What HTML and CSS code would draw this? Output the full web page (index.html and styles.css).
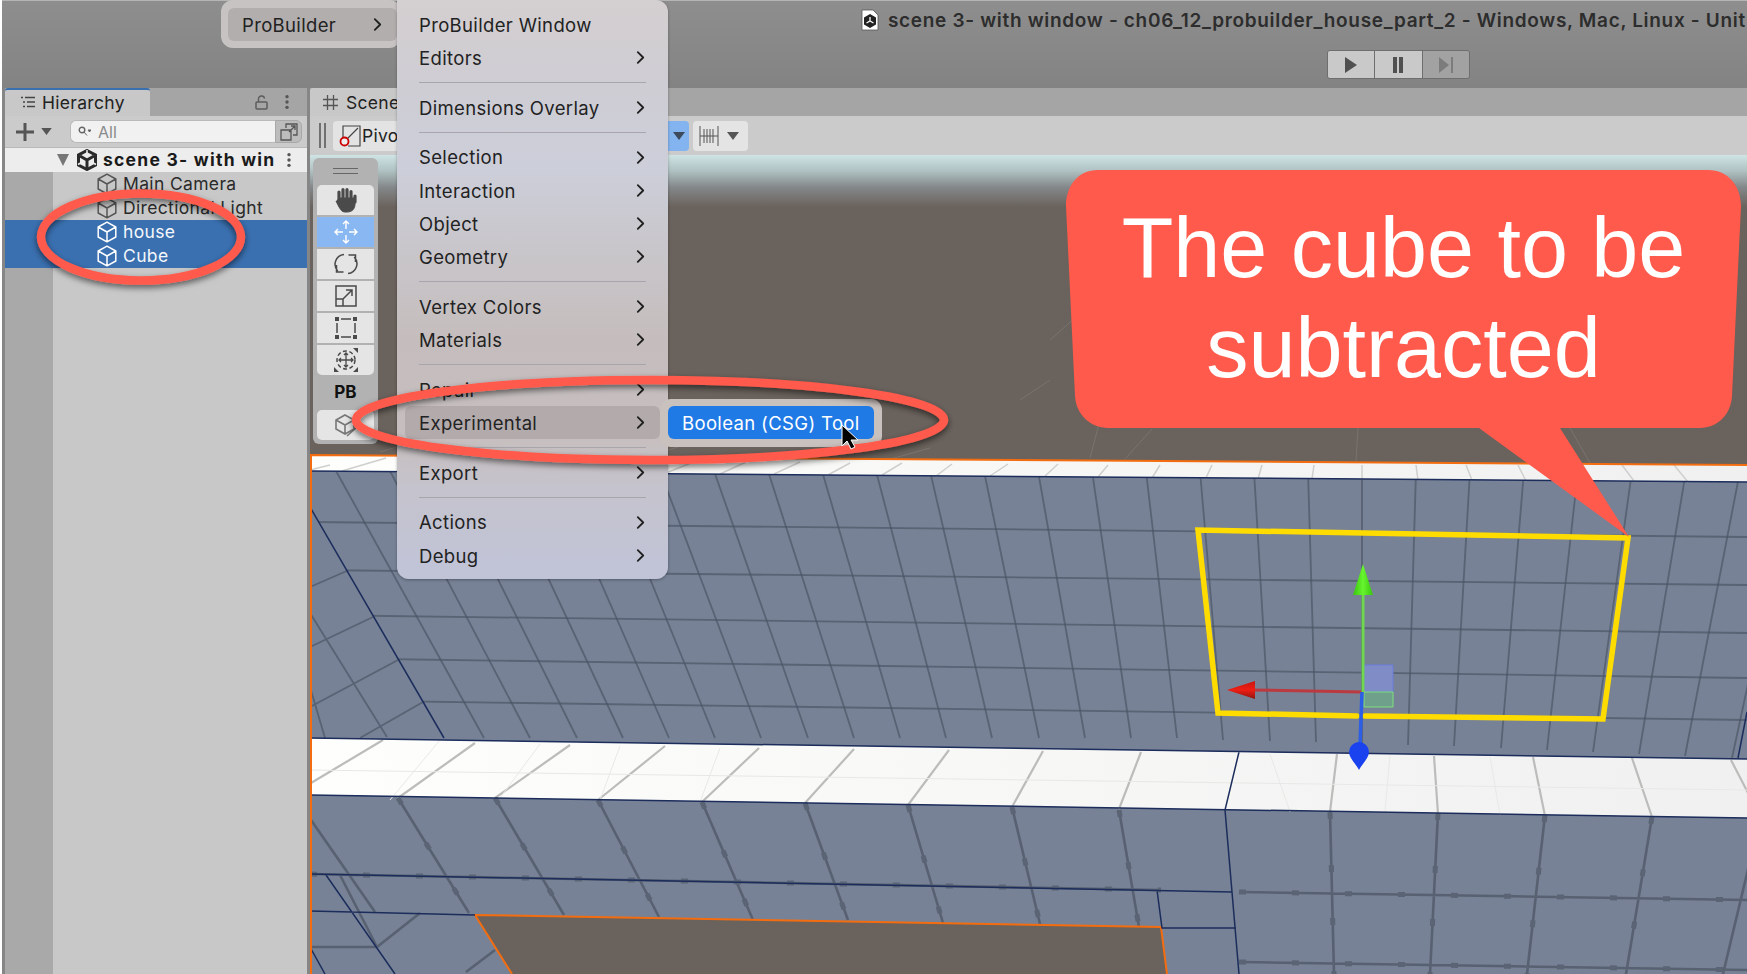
FILE: index.html
```html
<!DOCTYPE html>
<html lang="en">
<head>
<meta charset="utf-8">
<title>ProBuilder Boolean tool</title>
<link rel="stylesheet" href="styles.css">
</head>
<body>
<svg class="sprite" aria-hidden="true">
  <symbol id="chev" viewBox="0 0 10 16"><path d="M2 2L8 8L2 14" fill="none" stroke="currentColor" stroke-width="2" stroke-linecap="round" stroke-linejoin="round"/></symbol>
  <symbol id="cube" viewBox="0 0 20 22"><path d="M10 1.2L18.8 6V16L10 20.8L1.2 16V6ZM1.2 6L10 11L18.8 6M10 11V20.8" fill="none" stroke="currentColor" stroke-width="1.5" stroke-linejoin="round"/></symbol>
  <symbol id="kebab" viewBox="0 0 6 18"><circle cx="3" cy="3" r="1.9" fill="currentColor"/><circle cx="3" cy="9" r="1.9" fill="currentColor"/><circle cx="3" cy="15" r="1.9" fill="currentColor"/></symbol>
  <symbol id="tri" viewBox="0 0 12 8"><path d="M0 0H12L6 8Z" fill="currentColor"/></symbol>
</svg>
<div class="app">
  <header class="titlebar">
    <div class="title-row">
      <svg class="doc-icon" viewBox="0 0 18 22"><path d="M1 1H12L17 6V21H1Z" fill="#fff" stroke="#555" stroke-width=".8"/><path d="M9 5L15 8.500V15.500L9 19L3 15.500V8.500Z" fill="#222"/><path d="M9 8V12M5.500 14L9 12L12.500 14" stroke="#fff" stroke-width="1.300" fill="none"/></svg>
      <span class="title-text">scene 3- with window - ch06_12_probuilder_house_part_2 - Windows, Mac, Linux - Unit</span>
    </div>
    <div class="play-row">
      <div class="play-group">
        <div class="play-btn"><svg width="14" height="16" viewBox="0 0 14 16"><path d="M1 0L13 8L1 16Z" fill="#505050"/></svg></div>
        <div class="play-btn"><svg width="14" height="16" viewBox="0 0 14 16"><path d="M2 0H6V16H2ZM8 0H12V16H8Z" fill="#505050"/></svg></div>
        <div class="play-btn play-btn-off"><svg width="18" height="16" viewBox="0 0 18 16"><path d="M2 0L12 8L2 16Z M14 0H16V16H14Z" fill="#7c7c7c"/></svg></div>
      </div>
    </div>
  </header>

  <main class="workspace">
    <section class="hierarchy">
      <div class="tabbar">
        <div class="tab tab-active">
          <svg class="tab-icon" width="15" height="12" viewBox="0 0 15 12"><path d="M1 1.500H3M5 1.500H15M3 6H5M7 6H15M3 10.500H5M7 10.500H15" stroke="#444" stroke-width="1.300" fill="none"/></svg>
          <span>Hierarchy</span>
        </div>
        <div class="tab-actions">
          <svg width="13" height="15" viewBox="0 0 13 15"><path d="M3.500 7V4.500A3 3 0 0 1 9.500 3.500" fill="none" stroke="#5c5c5c" stroke-width="1.400"/><rect x="1" y="7" width="11" height="7" rx="1" fill="none" stroke="#5c5c5c" stroke-width="1.500"/></svg>
          <svg class="kebab-icon" width="6" height="16"><use href="#kebab"/></svg>
        </div>
      </div>
      <div class="h-toolbar">
        <svg width="20" height="20" viewBox="0 0 20 20"><path d="M10 1V19M1 10H19" stroke="#555" stroke-width="3"/></svg>
        <svg class="drop-tri" width="11" height="7"><use href="#tri"/></svg>
        <div class="search">
          <svg width="13" height="11" viewBox="0 0 13 11"><circle cx="4" cy="4" r="2.800" fill="none" stroke="#666" stroke-width="1.400"/><path d="M6 6L9 9.500M10 4H13L11.500 6Z" stroke="#666" fill="#666"/></svg>
          <span>All</span>
        </div>
        <div class="search-btn"><svg width="18" height="18" viewBox="0 0 18 18"><path d="M6 5V1H17V12H13M1 7H11V17H1ZM9 9L15 3M11 3H15V7" fill="none" stroke="#555" stroke-width="1.300"/></svg></div>
      </div>
      <div class="tree">
        <div class="gutter"></div>
        <div class="tree-root">
          <svg class="expander" width="12" height="12" viewBox="0 0 12 12"><path d="M0 0H12L6 12Z" fill="#777"/></svg>
          <svg class="unity-icon" width="20" height="22" viewBox="0 0 20 22"><path d="M10 1.500L18.500 6V16L10 20.500L1.500 16V6Z" fill="none" stroke="#2a2a2a" stroke-width="3"/><path d="M10 11V20M3 7L10 11L17 7" stroke="#2a2a2a" stroke-width="3" fill="none"/><path d="M10 1L10 5M1 15.500L4.500 13.500M19 15.500L15.500 13.500" stroke="#ececec" stroke-width="1.500"/></svg>
          <span class="root-name">scene 3- with win</span>
          <svg class="kebab-icon" width="6" height="16"><use href="#kebab"/></svg>
        </div>
        <div class="tree-item"><svg class="cube-icon" width="20" height="22"><use href="#cube"/></svg><span>Main Camera</span></div>
        <div class="tree-item"><svg class="cube-icon" width="20" height="22"><use href="#cube"/></svg><span>Directional Light</span></div>
        <div class="tree-item tree-item-on"><svg class="cube-icon" width="20" height="22"><use href="#cube"/></svg><span>house</span></div>
        <div class="tree-item tree-item-on"><svg class="cube-icon" width="20" height="22"><use href="#cube"/></svg><span>Cube</span></div>
      </div>
    </section>

    <section class="scene">
      <div class="tabbar">
        <div class="tab scene-tab">
          <svg class="tab-icon" width="15" height="15" viewBox="0 0 15 15"><path d="M4.500 0V15M10.500 0V15M0 4.500H15M0 10.500H15" stroke="#555" stroke-width="1.300"/></svg>
          <span>Scene</span>
        </div>
      </div>
      <div class="s-toolbar">
        <div class="grip"></div>
        <div class="tool-pivot">
          <svg width="22" height="22" viewBox="0 0 22 22"><path d="M4 13V1H21V21H9M4 18L19 3" fill="none" stroke="#444" stroke-width="1.200"/><circle cx="5.500" cy="16.500" r="4" fill="#eee" stroke="#c00" stroke-width="1.800"/></svg>
          <span>Pivot</span>
        </div>
        <div class="tool-blue"><svg width="12" height="8"><use href="#tri"/></svg></div>
        <div class="tool-snap">
          <svg width="20" height="20" viewBox="0 0 20 20"><path d="M1 0V20M19 0V20M5 3V17M8 3V17M11 3V17M14 3V17M1 10H19" stroke="#555" stroke-width="1"/></svg>
          <svg width="12" height="8"><use href="#tri"/></svg>
        </div>
      </div>
      <div class="viewport">
        <svg class="world" viewBox="310 155 1437 819" preserveAspectRatio="none">
          <defs>
            <linearGradient id="sky" x1="0" y1="0" x2="0" y2="1">
              <stop offset="0" stop-color="#cfe4e4"/><stop offset=".3" stop-color="#b0c2c3"/><stop offset=".62" stop-color="#84888a"/><stop offset="1" stop-color="#6a625c"/>
            </linearGradient>
            <linearGradient id="strip" x1="0" y1="0" x2="1" y2="0"><stop offset="0" stop-color="#fefefc"/><stop offset="1" stop-color="#f0f0f0"/></linearGradient>
            <linearGradient id="cone-g" x1="0" y1="0" x2="1" y2="0"><stop offset="0" stop-color="#38c40e"/><stop offset=".5" stop-color="#66f52e"/><stop offset="1" stop-color="#38c40e"/></linearGradient>
            <linearGradient id="cone-r" x1="0" y1="0" x2="0" y2="1"><stop offset="0" stop-color="#c81610"/><stop offset=".5" stop-color="#ee1e14"/><stop offset="1" stop-color="#8e1410"/></linearGradient>
            <clipPath id="wall-a"><path d="M310 507L310 471L1747 482V759L444 738Z"/></clipPath>
            <clipPath id="wall-b"><path d="M310 507L444 738H310Z"/></clipPath>
          </defs>
          <rect class="ground" x="310" y="155" width="1437" height="819"/>
          <rect x="310" y="155" width="1437" height="52" fill="url(#sky)"/>
          <path class="faint-g" d="M1152 429L1125 459M1358 428L1356 461M1570 428L1590 463M1095 300L1050 340M1100 420L1090 458M380 452L420 440M700 440L640 459M930 448L880 462M1050 380L1020 400"/>

          <path d="M310 455L1747 465V482L310 471Z" fill="url(#strip)"/>
          <path d="M310 738L1747 759V818L310 795Z" fill="url(#strip)"/>
          <path class="wall" d="M310 471L1747 482V759L310 738Z"/>
          <path class="wall" d="M310 795L1747 818V974H310Z"/>

          <path class="strip-grid" d="M310 470L330 465M342 471L386 458M396 472L436 459M450 472L488 460M504 472L540 460M558 473L592 461M612 473L644 461M666 473L696 461M720 474L746 462M774 474L800 462M828 475L850 463M882 475L902 463M936 476L952 464M990 476L1008 464M1044 477L1058 464M1098 477L1108 465M1152 478L1160 465M1206 478L1212 465M1258 479L1262 465M1312 479L1314 465M1362 480V465M1418 480L1416 465M1472 480L1466 465M1526 481L1518 465M1580 481L1572 465M1634 481L1622 465M1688 482L1674 465"/>
          <g clip-path="url(#wall-a)">
            <path class="grid" d="M336 471L484 738M390 471L530 738M444 471L577 738M498 471L623 738M552 471L669 738M606 471L715 738M660 471L761 738M714 471L808 738M768 471L854 738M822 471L900 738M876 471L946 738M930 471L992 738M984 471L1039 738M1038 471L1085 738M1092 471L1131 738M1146 471L1177 738M1200 471L1223 740M1254 471L1270 741M1308 471L1316 742M1362 471V745M1416 471L1408 745M1470 471L1454 746M1524 471L1501 748M1578 471L1547 750M1632 471L1593 752M1686 471L1639 754M1740 471L1685 756M1794 471L1732 758"/>
            <path class="grid" d="M310 522L1747 537M310 570L1747 585M310 615L1747 633M310 658L1747 678M310 700L1747 720"/>
          </g>
          <g clip-path="url(#wall-b)">
            <path class="grid" d="M349 570L310 587M373 617L310 647M398 660L310 707M423 702L360 738M310 613L387 737M310 687L325 738"/>
          </g>
          <path class="strip-grid strip-grid-b" d="M311 783L383 740M398 798L475 743M495 798L570 745M598 800L665 746M702 802L759 748M805 803L854 749M908 805L949 750M1012 807L1043 751M1119 809L1141 752M1330 812L1337 754M1438 814L1434 756M1545 816L1533 757M1652 817L1632 758M1762 820L1731 760"/>
          <path class="strip-faint" d="M310 770L1747 790M440 740L390 800M540 744L500 798M620 746L600 800M720 748L700 802M1270 754L1290 812M1390 755L1385 812M1490 757L1500 815"/>
          <path class="grid grid-low" d="M398 798L469 913M495 798L564 915M598 800L659 917M702 802L753 920M805 803L848 920M908 805L943 923M1012 807L1040 924M1119 810L1139 927M1330 812L1334 974M1438 813L1430 974M1545 815L1527 974M1652 817L1626 974M1760 819L1723 974M311 820L375 912M420 913L377 947M495 950L466 972M340 875L377 947M310 874L1161 890M1239 892L1747 900M1239 962L1747 970M310 947H378"/>
          <path class="grid-ticks" d="M398 798L469 913M495 798L564 915M598 800L659 917M702 802L753 920M805 803L848 920M908 805L943 923M1012 807L1040 924M1119 810L1139 927M1330 812L1334 974M1438 813L1430 974M1545 815L1527 974M1652 817L1626 974M310 874L1161 890M1239 892L1747 900M1239 962L1747 970"/>

          <path class="hole" d="M475 915L1161 927L1167 974H512Z"/>
          <path class="edge-o" d="M512 974L475 915L1161 927L1167 974"/>
          <path class="edge-n" d="M310 738L1747 759M310 795L1747 818M310 471L1747 482M310 507L444 738M1239 752L1225 810L1239 974M310 874L1232 892M310 911L475 915M326 875L395 974M310 947L325 974M1157 890L1162 928H1236M1747 712L1738 758"/>
          <path class="edge-o" d="M310 455L1747 465M311 455V974"/>

          <path class="yellow" d="M1357 716L1218 713L1198 530L1628 538L1603 719L1365 716"/>
          <path class="plane-b" d="M1364 665H1393V692H1364Z"/>
          <path class="plane-g" d="M1364 692H1393V707H1364Z"/>
          <path class="axis-r" d="M1362 692L1252 690"/>
          <path d="M1227 690L1255 681V699Z" fill="url(#cone-r)"/>
          <path class="axis-g" d="M1363 692V592"/>
          <path d="M1363 564L1373 595H1353Z" fill="url(#cone-g)"/>
          <path class="axis-b" d="M1362 692L1360 745"/>
          <path d="M1349 752A10 10 0 0 1 1369 752C1369 758 1362 764 1359 770C1356 764 1349 758 1349 752Z" fill="#1a42ee"/>
        </svg>
        <div class="tools">
          <div class="tools-grip"></div>
          <div class="tool-btn tool-first"><svg width="24" height="26" viewBox="0 0 24 26"><path d="M5 14V5M9 13V2.500M13 13V2.500M17 13V4.500M21 15V9" stroke="#4a4a4a" stroke-width="3.200" stroke-linecap="round"/><path d="M5 11H21V17C21 22 18 25 13 25H11C8 25 7 23 5 20L2 14" fill="#4a4a4a" stroke="#4a4a4a" stroke-linejoin="round"/></svg></div>
          <div class="tool-btn tool-on"><svg width="24" height="24" viewBox="0 0 24 24"><path d="M12 1V9M12 15V23M1 12H9M15 12H23M9 4L12 1L15 4M9 20L12 23L15 20M4 9L1 12L4 15M20 9L23 12L20 15" fill="none" stroke="#fff" stroke-width="1.400"/></svg></div>
          <div class="tool-btn"><svg width="24" height="24" viewBox="0 0 24 24"><path d="M10 2.500A9.800 9.800 0 0 0 3.800 19M2.500 13V20H9.500M14 21.500A9.800 9.800 0 0 0 20.200 5M14.500 3H21.500V10" fill="none" stroke="#4a4a4a" stroke-width="1.500"/></svg></div>
          <div class="tool-btn"><svg width="22" height="22" viewBox="0 0 22 22"><path d="M1 1H21V21H1ZM1 14H8V21M8 14L17 5M11 5H17V11" fill="none" stroke="#4a4a4a" stroke-width="1.500"/></svg></div>
          <div class="tool-btn"><svg width="22" height="22" viewBox="0 0 22 22"><path d="M0 0H4V4H0ZM18 0H22V4H18ZM0 18H4V22H0ZM18 18H22V22H18Z" fill="#4a4a4a"/><path d="M6 2H16M6 20H16M2 6V16M20 6V16" stroke="#4a4a4a" stroke-width="1.500"/></svg></div>
          <div class="tool-btn tool-last"><svg width="24" height="24" viewBox="0 0 24 24"><circle cx="12" cy="12" r="9" fill="none" stroke="#4a4a4a" stroke-width="1.500" stroke-dasharray="4 2.500"/><path d="M12 5V19M5 12H19M10 7L12 5L14 7M10 17L12 19L14 17M7 10L5 12L7 14M17 10L19 12L17 14" fill="none" stroke="#4a4a4a" stroke-width="1.300"/><path d="M0 24V19L5 24ZM24 0V5L19 0ZM24 24V19L19 24Z" fill="#4a4a4a"/></svg></div>
          <div class="tools-label">PB</div>
          <div class="tool-btn tool-cube"><svg width="24" height="24" viewBox="0 0 24 24"><path d="M11 2L20 7V16L11 21L2 16V7ZM2 7L11 12L20 7M11 12V21M13 23L22 15" fill="none" stroke="#777" stroke-width="1.600"/></svg></div>
        </div>
      </div>
    </section>
  </main>

  <nav class="menu menu-root">
    <div class="menu-row menu-row-hover"><span>ProBuilder</span><svg class="chev"><use href="#chev"/></svg></div>
  </nav>

  <nav class="menu menu-main">
    <div class="menu-row"><span>ProBuilder Window</span></div>
    <div class="menu-row"><span>Editors</span><svg class="chev"><use href="#chev"/></svg></div>
    <div class="menu-sep"></div>
    <div class="menu-row"><span>Dimensions Overlay</span><svg class="chev"><use href="#chev"/></svg></div>
    <div class="menu-sep"></div>
    <div class="menu-row"><span>Selection</span><svg class="chev"><use href="#chev"/></svg></div>
    <div class="menu-row"><span>Interaction</span><svg class="chev"><use href="#chev"/></svg></div>
    <div class="menu-row"><span>Object</span><svg class="chev"><use href="#chev"/></svg></div>
    <div class="menu-row"><span>Geometry</span><svg class="chev"><use href="#chev"/></svg></div>
    <div class="menu-sep"></div>
    <div class="menu-row"><span>Vertex Colors</span><svg class="chev"><use href="#chev"/></svg></div>
    <div class="menu-row"><span>Materials</span><svg class="chev"><use href="#chev"/></svg></div>
    <div class="menu-sep"></div>
    <div class="menu-row"><span>Repair</span><svg class="chev"><use href="#chev"/></svg></div>
    <div class="menu-row menu-row-open"><span>Experimental</span><svg class="chev"><use href="#chev"/></svg></div>
    <div class="menu-sep"></div>
    <div class="menu-row"><span>Export</span><svg class="chev"><use href="#chev"/></svg></div>
    <div class="menu-sep"></div>
    <div class="menu-row"><span>Actions</span><svg class="chev"><use href="#chev"/></svg></div>
    <div class="menu-row"><span>Debug</span><svg class="chev"><use href="#chev"/></svg></div>
  </nav>

  <nav class="menu menu-sub">
    <div class="menu-row menu-row-active"><span>Boolean (CSG) Tool</span></div>
  </nav>

  <svg class="annotations" viewBox="0 0 1747 974">
    <defs>
      <filter id="soft" x="-10%" y="-20%" width="120%" height="150%"><feDropShadow dx="0" dy="3" stdDeviation="3" flood-color="#000" flood-opacity=".55"/></filter>
    </defs>
    <ellipse class="ring" cx="141" cy="237" rx="100" ry="43.500"/>
    <ellipse class="ring" cx="650" cy="420" rx="294" ry="40"/>
    <path class="bubble" d="M1098 170H1708C1728 170 1741 186 1741 206L1732 396C1731 414 1718 428 1700 428H1560L1629 537L1479 428H1108C1090 428 1076 414 1075 396L1066 206C1066 186 1078 170 1098 170Z"/>
    <path class="cursor" d="M842 425V446L847 441L851 449L855 447L851 440H858Z"/>
  </svg>
  <div class="bubble-text">The cube to be<br>subtracted</div>
</div>
</body>
</html>
```
FILE: styles.css
```css
* { box-sizing: border-box; }
html, body { margin: 0; padding: 0; background: #fff; }
body { font-family: Inter, "Liberation Sans", sans-serif; color: #1f1f1f; }
.sprite { position: absolute; width: 0; height: 0; }
svg { display: block; flex: none; }

.app { position: relative; width: 1747px; height: 974px; overflow: hidden; padding-left: 2px; }

/* window chrome */
.titlebar { height: 88px; background: linear-gradient(#8e8e8e, #838383); border-top: 1px solid #b5b5b5; }
.title-row { display: flex; align-items: center; gap: 9px; height: 38px; padding-left: 859px; white-space: nowrap; }
.doc-icon { width: 18px; height: 22px; }
.title-text { font-size: 19px; font-weight: 600; letter-spacing: .68px; color: #2d2d2d; }
.play-row { padding: 11px 0 0 1325px; }
.play-group { display: flex; width: 143px; height: 29px; border: 1px solid #6e6e6e; border-radius: 3px; overflow: hidden; }
.play-btn { flex: 1; display: flex; align-items: center; justify-content: center; background: #c9c9c9; border-right: 1px solid #6e6e6e; }
.play-btn-off { background: #a2a2a2; border-right: 0; }

.workspace { display: flex; height: 886px; background: #868686; padding-left: 3px; gap: 3px; }

/* tabs */
.tabbar { display: flex; align-items: stretch; height: 28px; background: #a5a5a5; }
.tab { display: flex; align-items: center; background: #c8c8c8; font-size: 17.5px; letter-spacing: .3px; color: #222; }
.tab-active { width: 145px; padding: 0 0 2px 15px; gap: 7px; border-top: 2px solid #3a70b0; border-radius: 3px 3px 0 0; }
.scene-tab { width: 100px; padding-left: 13px; gap: 8px; border-radius: 3px 3px 0 0; }
.tab-actions { margin-left: auto; display: flex; align-items: center; gap: 16px; padding-right: 17px; color: #555; }
.kebab-icon { color: #555; }

/* hierarchy */
.hierarchy { width: 302px; background: #c8c8c8; display: flex; flex-direction: column; }
.h-toolbar { display: flex; align-items: center; height: 31px; background: #cbcbcb; padding: 0 5px 0 10px; }
.drop-tri { margin-left: 6px; color: #555; }
.search { display: flex; align-items: center; gap: 7px; width: 206px; height: 23px; margin-left: 18px; padding-left: 7px; background: #f1f1f1; border-radius: 6px 0 0 6px; border: 1px solid #b9b9b9; border-right: 0; font-size: 16px; color: #8a8a8a; }
.search-btn { display: flex; align-items: center; justify-content: center; width: 27px; height: 23px; background: #bcbcbc; border: 1px solid #a8a8a8; border-radius: 0 6px 6px 0; }

.tree { position: relative; flex: 1; border-top: 1px solid #b8b8b8; }
.gutter { position: absolute; left: 0; top: 24px; bottom: 0; width: 48px; background: #a9a9a9; }
.tree-root { position: relative; display: flex; align-items: center; height: 24px; padding-left: 52px; background: #ededed; font-size: 17.5px; line-height: 22px; font-weight: 700; letter-spacing: 1.25px; color: #1a1a1a; }
.unity-icon { margin-left: 8px; }
.root-name { margin-left: 6px; white-space: nowrap; }
.tree-root .kebab-icon { margin-left: 10px; }
.tree-item { position: relative; display: flex; align-items: center; gap: 6px; height: 24px; padding-left: 92px; font-size: 17.5px; letter-spacing: .35px; color: #2a2a2a; white-space: nowrap; }
.tree-item span { margin-top: -2px; }
.cube-icon { color: #555; }
.tree-item-on { background: #3a70b0; color: #f4f7fb; }
.tree-item-on .cube-icon { color: #fff; }

/* scene */
.scene { flex: 1; min-width: 0; display: flex; flex-direction: column; background: #6a625c; }
.s-toolbar { display: flex; align-items: center; height: 39px; background: #cbcbcb; padding-left: 9px; }
.grip { width: 7px; height: 25px; border-left: 2px solid #707070; border-right: 2px solid #707070; }
.tool-pivot { display: flex; align-items: center; gap: 1px; width: 335px; height: 30px; margin-left: 7px; padding-left: 6px; background: #e3e3e3; border-radius: 4px; font-size: 17.5px; letter-spacing: .3px; color: #222; }
.tool-blue { display: flex; align-items: center; justify-content: flex-end; width: 21px; height: 30px; padding-right: 4px; background: #84b4ef; border-radius: 0 4px 4px 0; color: #3c4a5c; }
.tool-snap { display: flex; align-items: center; gap: 8px; width: 55px; height: 30px; margin-left: 4px; padding-left: 6px; background: #e4e4e4; border-radius: 4px; color: #555; }
.viewport { position: relative; flex: 1; min-height: 0; }
.world { position: absolute; left: 0; top: 0; width: 100%; height: 100%; }

.ground { fill: #6a625c; }
.faint-g { fill: none; stroke: #7a726c; stroke-width: 1; }
.wall { fill: #778296; }
.hole { fill: #6a625c; }
.grid { fill: none; stroke: #4a5464; stroke-width: 1.800; stroke-opacity: .68; filter: blur(.5px); }
.grid-low { stroke: #525c6b; stroke-width: 2.600; stroke-opacity: .85; }
.grid-ticks { fill: none; stroke: #5a6474; stroke-width: 5; stroke-dasharray: 7 46; filter: blur(.5px); }
.strip-grid { fill: none; stroke: #cfcfcd; stroke-width: 1.500; filter: blur(.4px); }
.strip-grid-b { stroke: #bcbcba; stroke-width: 2.200; }
.strip-faint { fill: none; stroke: #e8e8e6; stroke-width: 1; }
.edge-n { fill: none; stroke: #1c2d5c; stroke-width: 1.500; }
.edge-o { fill: none; stroke: #f36d10; stroke-width: 2; }
.yellow { fill: none; stroke: #ffdc00; stroke-width: 5.500; stroke-linejoin: miter; stroke-linecap: round; }
.plane-b { fill: #7f8cc6; stroke: #6a7cdc; stroke-width: 1; }
.plane-g { fill: #6fa08c; stroke: #7ee07a; stroke-width: 1; }
.axis-r { stroke: #bb3a40; stroke-width: 3; }
.axis-g { stroke: #6fd84e; stroke-width: 3; }
.axis-b { stroke: #2c5ee6; stroke-width: 3.500; }

/* scene tools overlay */
.tools { position: absolute; left: 3px; top: 3px; width: 65px; height: 286px; padding: 0 4px; background: #b2b2b2; border-radius: 6px; display: flex; flex-direction: column; gap: 2px; }
.tools-grip { flex: none; height: 6px; width: 25px; margin: 10px auto 9px; border-top: 1px solid #666; border-bottom: 1px solid #666; }
.tool-btn { flex: none; display: flex; align-items: center; justify-content: center; height: 30px; background: #e5e5e5; }
.tool-first { border-radius: 5px 5px 0 0; }
.tool-last { border-radius: 0 0 5px 5px; }
.tool-on { background: #89b7f2; }
.tools-label { flex: none; height: 31px; line-height: 31px; text-align: center; font-size: 17px; font-weight: 700; color: #111; }
.tool-cube { border-radius: 5px; }

/* menus */
.menu { position: absolute; font-size: 18.5px; letter-spacing: .35px; color: #222; }
.menu-root { left: 221px; top: 0; width: 180px; height: 48px; padding: 8px 4px 0 7px; background: #c7c3c3; border-radius: 12px; }
.menu-main { left: 397px; top: 0; width: 271px; height: 579px; padding: 8px 8px 0; border-radius: 0 12px 12px 12px; box-shadow: 0 1px 3px rgba(0,0,0,.3); background: linear-gradient(#d4cfd0 0, #cecdd4 90px, #ccced9 170px, #c8c5c9 260px, #c5bdbd 340px, #c7bfbf 440px, #c5c3cd 490px, #c1c4d6 560px); }
.menu-sub { left: 660px; top: 399px; width: 222px; height: 48px; padding: 7px 8px; background: #c9c1bd; border-radius: 11px; }
.menu-row { display: flex; align-items: center; justify-content: space-between; height: 33.200px; padding: 0 15px 0 14px; border-radius: 6px; white-space: nowrap; }
.menu-root .menu-row { height: 33px; }
.menu-row-hover { background: #b2aeae; padding-right: 15px; }
.menu-row-open { background: #b3aaac; }
.menu-row-active { background: #1f7ae6; color: #fff; height: 33px; }
.menu-sep { height: 16.600px; display: flex; align-items: center; padding: 0 14px; }
.menu-sep::before { content: ""; flex: 1; height: 1px; background: #a9a5ad; }
.chev { width: 9px; height: 15px; color: #1f1f1f; }

/* annotations */
.annotations { position: absolute; left: 0; top: 0; width: 1747px; height: 974px; pointer-events: none; }
.ring { fill: none; stroke: #ff5a4b; stroke-width: 8.500; filter: url(#soft); }
.bubble { fill: #ff5a4b; }
.cursor { fill: #000; stroke: #fff; stroke-width: 1; }
.bubble-text { position: absolute; left: 1066px; top: 198px; width: 675px; text-align: center; font-family: "Liberation Sans", Arial, sans-serif; font-size: 84.500px; line-height: 100px; color: #fff; }
```
